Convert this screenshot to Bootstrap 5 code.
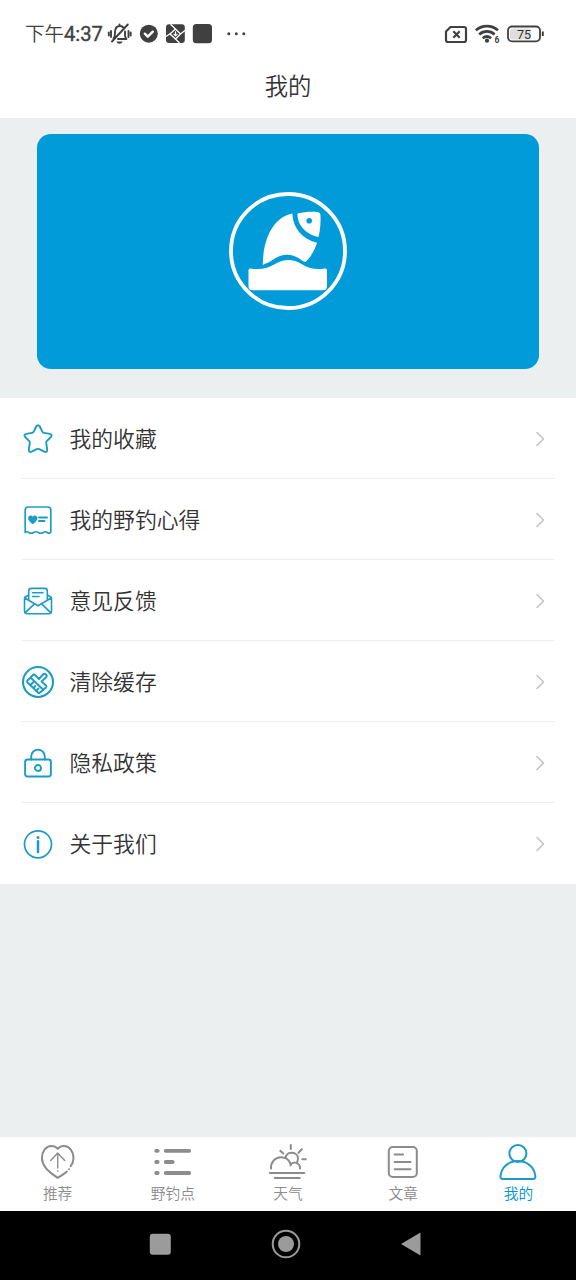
<!DOCTYPE html>
<html lang="zh-CN">
<head>
<meta charset="utf-8">
<meta name="viewport" content="width=device-width, initial-scale=1">
<title>我的</title>
<link href="https://cdn.jsdelivr.net/npm/bootstrap@5.3.0/dist/css/bootstrap.min.css" rel="stylesheet">
<style>
:root { --brand: #009bd8; --line: #1b9cc6; --page: #ebeff0; }
body { font-family: Roboto, "Noto Sans CJK SC", sans-serif; font-weight: 350; color: #333; background: var(--page); height: 1280px; overflow: hidden; }
svg { display: block; flex: none; fill: none; stroke: currentColor; stroke-linecap: round; stroke-linejoin: round; overflow: visible; }
.fill { fill: currentColor; stroke: none; }
.status-bar { height: 52px; padding: 14px 32px 0 25px; color: #404040; }
.status-time { width: 83px; font-size: 19.5px; line-height: 43px; margin-top: -1px; white-space: nowrap; }
.status-time b { font-weight: 400; font-size: 20.2px; -webkit-text-stroke: .35px currentColor; }
.page-title { height: 66px; font-size: 23.3px; line-height: 70px; font-weight: 350; }
.hero { height: 280px; padding: 16px 37px 30px; }
.hero-card { height: 234.5px; border-radius: 14px; background: var(--brand); }
.menu .list-group-item { height: 81px; padding: 0 22px; border: 0; color: #333; background: #fff; }
.menu-row { height: 81px; border-bottom: 1px solid #eee; font-size: 21.8px; gap: 16px; padding: 1px 8px 0 0; }
.menu-row span { padding-top: 3px; margin-left: -.5px; }
.menu .list-group-item:last-child .menu-row { border-bottom-color: transparent; }
.menu-row > svg:first-child { color: var(--line); stroke-width: 1.9; }
.menu-row > svg:last-child { color: #c4c4c4; stroke-width: 1.6; }
.tabs { height: 74.5px; background: #fff; }
.tabs .nav-link { padding: 5px 0 0; color: #8c8c8c; font-size: 14.7px; line-height: 23px; }
.tabs .nav-link svg { stroke-width: 2; margin-bottom: 1px; }
.tabs .nav-link.active { color: var(--line); }
.tabs .nav-link.active span { color: #0095cb; }
.system-nav { height: 69px; background: #000; color: #9b9b9b; padding: 0 155px 3px 149px; }
</style>
</head>
<body class="d-flex flex-column">
<header class="bg-white">
  <div class="status-bar d-flex">
    <div class="status-time">下午<b>4:37</b></div>
    <svg width="137" height="40" viewBox="108 14 137 40" stroke-width="1.9">
      <path d="M113.500 38.500c1.700-1.500 1.500-3 1.500-6 0-4 2-6.500 5-6.500 2 0 3 .8 3.800 2M125 31.500v3.500c0 2 .8 2.800 1.500 4H118M112 41.500l15.800-17M119.500 24.500v1M111 31v6M108.800 32.500v3M128.500 31v6M130.700 32.500v3"/>
      <path class="fill" d="M116.500 41.500h6c-.7 3-5.300 3-6 0z"/>
      <circle class="fill" cx="148.800" cy="33.700" r="9"/>
      <path stroke="#fff" stroke-width="2.400" d="m144.800 33.700 3 3 5-5"/>
      <rect class="fill" x="166" y="24.300" width="18.800" height="18.800" rx="3"/>
      <path stroke="#fff" stroke-width="1.300" stroke-linecap="butt" stroke-linejoin="miter" d="M170.500 24.300 175.500 29l5 5-5 5-5.500-5 5.500-5M166 36.500l4-2.700M180.500 34l4.500-3.500M175.500 39l4 4"/>
      <path stroke="#fff" stroke-width="1.200" d="M175.500 31.800v4m-1.500-1.500 1.500 1.600 1.500-1.600"/>
      <rect class="fill" x="192.800" y="24" width="19.200" height="19.200" rx="3.500"/>
      <g class="fill"><circle cx="228.800" cy="33.800" r="1.500"/><circle cx="236.300" cy="33.800" r="1.500"/><circle cx="243.800" cy="33.800" r="1.500"/></g>
    </svg>
    <svg class="ms-auto" width="100" height="40" viewBox="444 14 100 40">
      <path stroke-width="2.200" d="M450.500 27H464q2 0 2 2v11q0 2-2 2h-16q-2 0-2-2v-8.500z"/>
      <path stroke-width="2.200" stroke-linecap="butt" d="m453.300 31.300 6.400 6.400m0-6.400-6.400 6.400"/>
      <g stroke-width="2.700" stroke-linecap="butt"><path d="M475.800 30.200c6.500-5.500 15.700-5.500 22.200 0M479.200 34.400c4.600-4 10.800-4 15.400 0M482.700 38.300c2.600-2.200 5.800-2.200 8.400 0"/></g>
      <circle class="fill" cx="487" cy="40.700" r="2.100"/>
      <text x="494.500" y="43" fill="#404040" stroke="none" font-size="8.500" font-weight="700">6</text>
      <rect x="508" y="26.500" width="32" height="14.800" rx="4" stroke-width="1.800"/>
      <rect x="510" y="28.400" width="21" height="11" rx="2" fill="#dedede" stroke="none"/>
      <path stroke-width="2" stroke-linecap="butt" d="M542.800 31.500v4.500"/>
      <text x="524" y="38.600" fill="#333" stroke="none" text-anchor="middle" font-size="12.500" font-weight="400">75</text>
    </svg>
  </div>
  <h1 class="page-title text-center m-0">我的</h1>
</header>

<main class="flex-grow-1">
  <section class="hero">
    <div class="hero-card d-flex align-items-center justify-content-center">
      <svg class="text-white" width="118" height="118" viewBox="229 192 118 118">
        <circle cx="288" cy="251" r="57" stroke-width="3.800"/>
        <path class="fill" d="M292.300 213.500C275 217 263 236 262.800 265c3-1.500 7-3 10.500-5.500 8.500-6.500 19-6.500 27.500 0 1.800 1.400 3.200 2.200 4.600 2.500 4.500-3.500 9.600-12 11.600-19.200C301.500 238.500 293 228 292.300 213.500z"/>
        <path class="fill" d="M297.500 213.500c6.500-1.700 14.500-2.200 20-1.500 2 .3 3 1.500 3 3.500.3 7-.2 14.500-2 21.500-12-2.500-21.500-11.500-21-23.500z"/>
        <circle cx="309.200" cy="220.800" r="2.800" fill="#009bd8" stroke="none"/>
        <path class="fill" d="M248.500 270.200q0-2.200 2.500-1.700c9 1.800 17.500-.5 24-4.500 9-5.500 18-5.500 26.500 0 7 4.300 14 6.200 23 4.500q2.500-.4 2.500 1.700V286q0 4.300-4.300 4.300h-70q-4.200 0-4.200-4.300z"/>
      </svg>
    </div>
  </section>

  <div class="menu list-group list-group-flush rounded-0">
    <a href="#" class="list-group-item"><div class="menu-row d-flex align-items-center">
      <svg width="32" height="32" viewBox="-16 -16 32 32"><path d="M-1.800-12.500Q0-15 1.800-12.500L4.300-7.300Q4.800-6.300 6-6.100L11.800-5.100Q14.800-4.400 12.800-2L8.800 2.200Q8 3.100 8.200 4.200L9.200 10.500Q9.300 13.800 6.300 12.700L1.200 10.200Q0 9.600-1.200 10.200L-6.300 12.700Q-9.300 13.800-9.200 10.500L-8.200 4.200Q-8 3.100-8.800 2.200L-12.800-2Q-14.800-4.400-11.800-5.100L-6-6.100Q-4.800-6.300-4.300-7.300Z"/></svg>
      <span class="flex-grow-1">我的收藏</span>
      <svg width="12" height="16" viewBox="0 0 12 16"><path d="m3 1.500 6.500 6.500L3 14.500"/></svg>
    </div></a>
    <a href="#" class="list-group-item"><div class="menu-row d-flex align-items-center">
      <svg width="32" height="32" viewBox="-16 -16 32 32"><path d="M-12.800 12.500V-10q0-3 3-3H9.800q3 0 3 3v22.500q-1.500 1.500-3.500 0t-4.200 0-4.800 0-4.800 0-4.600 0-3.700 0z" stroke-width="1.700"/><path class="fill" d="M-5.200 4.200c-7-4.700-4.700-8.700-2.100-8.700 1.100 0 1.800.7 2.100 1.300.3-.6 1-1.300 2.100-1.300 2.600 0 4.900 4-2.100 8.700z"/><path d="M1-2.500h8M1 1h5.500"/></svg>
      <span class="flex-grow-1">我的野钓心得</span>
      <svg width="12" height="16" viewBox="0 0 12 16"><path d="m3 1.500 6.500 6.500L3 14.500"/></svg>
    </div></a>
    <a href="#" class="list-group-item"><div class="menu-row d-flex align-items-center">
      <svg width="32" height="32" viewBox="-16 -16 32 32"><path stroke-width="1.600" d="M-9.300-1v-9q0-2.600 2.600-2.600H6.700q2.600 0 2.600 2.600v9M-9.300-6l-3.500 2q-.7.500-.7 1.500V10q0 2.700 2.700 2.700h21.600q2.700 0 2.700-2.700V-2.500q0-1-.7-1.500l-3.500-2M-13.300-3 0 4.700 13.300-3M-13 11.800l9.500-9M13 11.800l-9.500-9M-5.500-8.300h10.500M-5.500-4.500h6.500"/></svg>
      <span class="flex-grow-1">意见反馈</span>
      <svg width="12" height="16" viewBox="0 0 12 16"><path d="m3 1.500 6.500 6.500L3 14.500"/></svg>
    </div></a>
    <a href="#" class="list-group-item"><div class="menu-row d-flex align-items-center">
      <svg width="32" height="32" viewBox="-16 -16 32 32"><circle r="15" stroke-width="2.100"/><path d="M-10.500-1.500-5-7q1-1 2 0l1.500 1.500L1-3l4-4.500q1.500-1.500 3 0t0 3L3.500-.5 8 3.500q1 1 0 2L2 10.500q-1 1-2 0L-10.500.5q-1-1 0-2zM-7.500-4.500 5.500 8M-7.500 3l2.500-2.500M-4.500 6l1.800-2M-2 9 .5 6.500"/></svg>
      <span class="flex-grow-1">清除缓存</span>
      <svg width="12" height="16" viewBox="0 0 12 16"><path d="m3 1.500 6.500 6.500L3 14.500"/></svg>
    </div></a>
    <a href="#" class="list-group-item"><div class="menu-row d-flex align-items-center">
      <svg width="32" height="32" viewBox="-16 -16 32 32"><rect x="-12.900" y="-3.500" width="25.800" height="17" rx="2.500"/><path d="M-6.800-3.500v-3c0-9 13.600-9 13.600 0v3"/><circle cy="5" r="3"/></svg>
      <span class="flex-grow-1">隐私政策</span>
      <svg width="12" height="16" viewBox="0 0 12 16"><path d="m3 1.500 6.500 6.500L3 14.500"/></svg>
    </div></a>
    <a href="#" class="list-group-item"><div class="menu-row d-flex align-items-center">
      <svg width="32" height="32" viewBox="-16 -16 32 32"><circle r="13.500" cy=".3" stroke-width="1.700"/><circle class="fill" cy="-6.500" r="1.500"/><path d="M0-2.700V8" stroke-width="2.500"/></svg>
      <span class="flex-grow-1">关于我们</span>
      <svg width="12" height="16" viewBox="0 0 12 16"><path d="m3 1.500 6.500 6.500L3 14.500"/></svg>
    </div></a>
  </div>
</main>

<nav class="tabs nav nav-justified flex-nowrap">
  <a href="#" class="nav-link d-flex flex-column align-items-center">
    <svg width="40" height="40" viewBox="37.600 1142 40 40"><path d="M66.500 1171.500c-2.500 2.300-5.700 4.200-9.200 6.300-9-5.500-15.800-11.300-15.800-19.800 0-6.500 4-12 9.500-12 2.500 0 4.500.8 6.300 2.800 1.800-2 3.800-2.800 6.300-2.800 5.500 0 9.500 5.500 9.500 12 0 3-1 5.700-2.800 8.200M68.600 1169.200v.1"/><path stroke-width="1.400" d="M57.300 1168v-14.500m-7 7 7-7.500 7 7.500M57.300 1171v.2"/></svg>
    <span>推荐</span>
  </a>
  <a href="#" class="nav-link d-flex flex-column align-items-center">
    <svg width="40" height="40" viewBox="152.800 1142 40 40"><path stroke-width="3.800" d="M156 1150.800h1.500M156 1162h1.500M156 1173h1.500M165.500 1150.800h23.500M165.500 1162h7M165.500 1173h23.500"/></svg>
    <span>野钓点</span>
  </a>
  <a href="#" class="nav-link d-flex flex-column align-items-center">
    <svg width="40" height="40" viewBox="268 1142 40 40" stroke-linecap="butt"><path d="M271 1168.500c-.5-6 4-11.300 10-11.300 4.500 0 8.300 2.800 9.500 7M285.500 1158c1-7.500 12.500-6.500 12.500.5 0 1.800-.5 3.200-1.500 4.200M290.500 1165.500c1.500-5 10-3 9.500 3M269.800 1173h34.500M274.800 1178h25M290.800 1145v4M280.300 1150.800l3 2.700M301.700 1149.300l-3.200 3.400M302.300 1159.200h3.500"/></svg>
    <span>天气</span>
  </a>
  <a href="#" class="nav-link d-flex flex-column align-items-center">
    <svg width="40" height="40" viewBox="383.200 1142 40 40"><rect x="389" y="1147" width="28" height="30" rx="4"/><path d="M394.800 1154.500h8.500M394.800 1162h16M394.800 1169.300h16" stroke-width="1.900"/></svg>
    <span>文章</span>
  </a>
  <a href="#" class="nav-link active d-flex flex-column align-items-center">
    <svg width="40" height="40" viewBox="498.400 1142 40 40"><circle cx="518.300" cy="1153.500" r="8.500"/><path d="M511.500 1162.200c-6 2.500-10 8-10.700 14-.1 1.800.8 2.800 2.400 2.800h30.200c1.600 0 2.500-1 2.400-2.800-.7-6-4.700-11.500-10.700-14q-6.800-2.500-13.600 0z"/></svg>
    <span>我的</span>
  </a>
</nav>
<footer class="system-nav d-flex align-items-center justify-content-between">
  <svg width="22" height="22" viewBox="0 0 22 22"><rect class="fill" x=".8" y=".8" width="21" height="21" rx="3"/></svg>
  <svg width="30" height="30" viewBox="0 0 30 30"><circle cx="15" cy="15" r="13.300" stroke-width="2"/><circle class="fill" cx="15" cy="15" r="8"/></svg>
  <svg width="21" height="26" viewBox="0 0 21 26"><path class="fill" d="M20.500 1.500v23L1 13z"/></svg>
</footer>
<script src="https://cdn.jsdelivr.net/npm/bootstrap@5.3.0/dist/js/bootstrap.bundle.min.js"></script>
</body>
</html>
